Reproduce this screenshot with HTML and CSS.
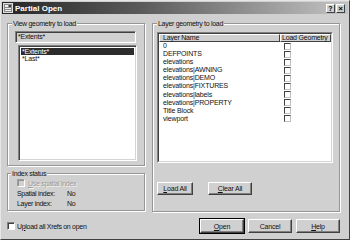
FILE: index.html
```html
<!DOCTYPE html>
<html>
<head>
<meta charset="utf-8">
<link rel="stylesheet" href="styles.css">
</head>
<body>
<div class="window">
  <div class="titlebar">
    <span class="ticon">
      <svg width="10" height="10" viewBox="0 0 10 10">
        <rect x="0.5" y="0.5" width="9" height="9" fill="#8a8a8a" stroke="#e0e0e0"/>
        <rect x="2" y="2" width="3" height="2" fill="#f0f0f0"/>
        <rect x="2" y="5" width="6" height="1" fill="#f0f0f0"/>
        <rect x="2" y="7" width="6" height="1" fill="#f0f0f0"/>
        <rect x="6" y="2" width="2" height="2" fill="#404040"/>
      </svg>
    </span>
    <span class="ttext">Partial Open</span>
    <span class="tbtns"><span class="tbtn">?</span><span class="tbtn tclose">×</span></span>
  </div>
  <div class="body">
    <div class="cols">
      <div class="leftcol">
        <fieldset class="group g-view">
          <legend>View geometry to load</legend>
          <div class="gbody">
            <div class="field">*Extents*</div>
            <div class="listbox">
              <div class="item sel">*Extents*</div>
              <div class="item">*Last*</div>
            </div>
          </div>
        </fieldset>
        <fieldset class="group g-index">
          <legend>Index status</legend>
          <div class="gbody">
            <div class="row chk disabled"><span class="box"></span><span class="lbl"><u>U</u>se spatial index</span></div>
            <div class="row kv"><span class="k">Spatial index:</span><span>No</span></div>
            <div class="row kv"><span class="k">Layer index:</span><span>No</span></div>
          </div>
        </fieldset>
      </div>
      <fieldset class="group g-layer">
        <legend>Layer geometry to load</legend>
        <div class="gbody">
          <div class="lv-outer">
            <div class="lv">
              <div class="lv-head">
                <div class="hcell c1">Layer Name</div>
                <div class="hcell c2">Load Geometry</div>
              </div>
              <div class="lv-rows">
                <div class="lrow"><span class="c1">0</span><span class="c2"><span class="box"></span></span></div>
                <div class="lrow"><span class="c1">DEFPOINTS</span><span class="c2"><span class="box"></span></span></div>
                <div class="lrow"><span class="c1">elevations</span><span class="c2"><span class="box"></span></span></div>
                <div class="lrow"><span class="c1">elevations|AWNING</span><span class="c2"><span class="box"></span></span></div>
                <div class="lrow"><span class="c1">elevations|DEMO</span><span class="c2"><span class="box"></span></span></div>
                <div class="lrow"><span class="c1">elevations|FIXTURES</span><span class="c2"><span class="box"></span></span></div>
                <div class="lrow"><span class="c1">elevations|labels</span><span class="c2"><span class="box"></span></span></div>
                <div class="lrow"><span class="c1">elevations|PROPERTY</span><span class="c2"><span class="box"></span></span></div>
                <div class="lrow"><span class="c1">Title Block</span><span class="c2"><span class="box"></span></span></div>
                <div class="lrow"><span class="c1">viewport</span><span class="c2"><span class="box"></span></span></div>
              </div>
            </div>
          </div>
          <div class="gbtns">
            <span class="btn b-load"><u>L</u>oad All</span>
            <span class="btn b-clear"><u>C</u>lear All</span>
          </div>
        </div>
      </fieldset>
    </div>
    <div class="bottom">
      <div class="chk upload"><span class="box"></span><span class="lbl">U<u>p</u>load all Xrefs on open</span></div>
      <div class="btns">
        <span class="btn default"><u>O</u>pen</span>
        <span class="btn">Cancel</span>
        <span class="btn"><u>H</u>elp</span>
      </div>
    </div>
  </div>
</div>
</body>
</html>
```

FILE: styles.css
```css
* { box-sizing: border-box; }
html, body { margin: 0; padding: 0; }
body {
  width: 350px;
  height: 240px;
  overflow: hidden;
  background: #d0d0d0;
  font-family: "Liberation Sans", Arial, sans-serif;
  font-size: 7px;
  letter-spacing: -0.3px;
  color: #111;
}
u { text-decoration: underline; text-underline-offset: 1px; }

.window {
  width: 350px;
  height: 240px;
  background: #d0d0d0;
  border: 1px solid;
  border-color: #e6e6e6 #404040 #404040 #e6e6e6;
  padding: 1px;
  display: flex;
  flex-direction: column;
}

.titlebar {
  height: 12px;
  flex: none;
  background: linear-gradient(to right, #262626 0%, #5a5a5a 40%, #c4c4c4 100%);
  display: flex;
  align-items: center;
  padding: 0 3px 0 1px;
  color: #fff;
}
.ticon { width: 10px; height: 10px; display: flex; }
.ttext { font-weight: bold; font-size: 8px; margin-left: 2px; letter-spacing: 0; }
.tbtns { margin-left: auto; display: flex; gap: 1px; }
.tbtn {
  width: 9px; height: 9px;
  background: #d0d0d0;
  color: #000;
  border: 1px solid;
  border-color: #fff #404040 #404040 #fff;
  font-size: 7px;
  font-weight: bold;
  line-height: 7px;
  text-align: center;
  letter-spacing: 0;
}
.tclose { font-size: 8px; }

.body {
  flex: 1;
  padding: 5px 8px 0 5px;
  display: flex;
  flex-direction: column;
}
.cols { display: flex; gap: 7px; }
.leftcol { width: 138px; display: flex; flex-direction: column; gap: 3px; }

.group {
  margin: 0;
  padding: 0;
  min-width: 0;
  border: 1px solid #969696;
  box-shadow: inset 1px 1px 0 #fff, 1px 1px 0 #fff;
}
.group legend {
  margin-left: 4px;
  padding: 0 1px;
  line-height: 9px;
  height: 9px;
  background: #d0d0d0;
}
.g-index legend { margin-left: 3px; }

.g-view .gbody { padding: 3px 0 4px 7px; }
.field {
  width: 121px;
  height: 12px;
  border: 1px solid;
  border-color: #808080 #fff #fff #808080;
  box-shadow: inset 1px 1px 0 #404040, inset -1px -1px 0 #d4d4d4;
  padding: 0 2px;
  line-height: 10px;
  letter-spacing: -0.2px;
}
.listbox {
  margin: 2px 0 0 3px;
  width: 119px;
  height: 116px;
  background: #fff;
  border: 1px solid;
  border-color: #808080 #fff #fff #808080;
  box-shadow: inset 1px 1px 0 #404040, inset -1px -1px 0 #d4d4d4;
  padding: 2px 2px;
}
.item { height: 7px; line-height: 7px; padding-left: 1px; letter-spacing: -0.2px; }
.item.sel { background: #2c2c2c; color: #fff; }

.g-index .gbody { padding: 0 0 2px 9px; }
.row { height: 10px; display: flex; align-items: center; }
.kv .k { width: 50px; }

.box {
  display: inline-block;
  width: 8px; height: 8px;
  background: #fff;
  border: 1px solid;
  border-color: #808080 #fff #fff #808080;
  box-shadow: inset 1px 1px 0 #404040;
  flex: none;
}
.chk { display: flex; align-items: center; }
.chk .lbl { margin-left: 3px; }
.chk.disabled .box { background: #d0d0d0; border-color: #a0a0a0 #fff #fff #a0a0a0; box-shadow: inset 1px 1px 0 #909090; }
.chk.disabled .lbl { color: #9a9a9a; text-shadow: 1px 1px 0 #f4f4f4; }

.g-layer { flex: 1; }
.g-layer .gbody { padding: 4px 0 16px 4px; }
.lv-outer {
  width: 176px;
  height: 131px;
  border: 1px solid;
  border-color: #808080 #fff #fff #808080;
}
.lv {
  height: 100%;
  background: #fff;
  border: 1px solid;
  border-color: #404040 #d4d4d4 #d4d4d4 #404040;
}
.lv-head { display: flex; height: 8px; }
.hcell {
  height: 8px;
  background: #d0d0d0;
  border: 1px solid;
  border-color: #fff #404040 #404040 #fff;
  line-height: 6px;
  padding-left: 3px;
  white-space: nowrap;
  letter-spacing: -0.2px;
}
.hcell.c2 { padding-left: 1px; }
.c1 { width: 121px; }
.c2 { width: 51px; }
.lrow { display: flex; height: 8.1px; line-height: 8.1px; letter-spacing: -0.15px; }
.lrow .c1 { padding-left: 4px; white-space: nowrap; }
.lrow .c2 { padding-left: 4px; display: flex; align-items: center; }
.lrow .box { width: 7px; height: 7px; border-color: #404040 #c0c0c0 #c0c0c0 #404040; box-shadow: none; }

.gbtns { display: flex; gap: 15px; margin-top: 19px; }
.btn {
  display: inline-flex;
  align-items: center;
  justify-content: center;
  height: 13px;
  background: #d0d0d0;
  border: 1px solid;
  border-color: #fff #404040 #404040 #fff;
  box-shadow: inset -1px -1px 0 #808080;
  letter-spacing: -0.2px;
}
.b-load { width: 36px; }
.b-clear { width: 44px; }

.bottom {
  display: flex;
  align-items: center;
  justify-content: space-between;
  margin-top: 7px;
}
.upload .lbl { margin-left: 2px; }
.btns { display: flex; gap: 4px; }
.btns .btn { width: 44px; height: 14px; }
.btn.default { outline: 1px solid #000; outline-offset: 0; }
```
